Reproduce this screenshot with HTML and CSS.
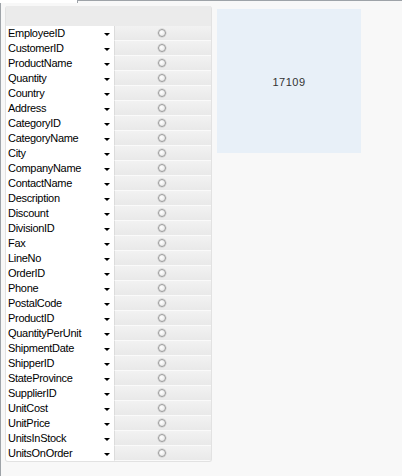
FILE: index.html
```html
<!DOCTYPE html>
<html lang="en">
<head>
    <meta charset="UTF-8">
    <title>Field list</title>
    <link rel="stylesheet" href="styles.css">
</head>
<body>
    <div class="tabline">
        <div class="tab"></div>
        <div class="rule"></div>
    </div>
    <div class="content">
        <div class="grid">
            <div class="grid-head"></div>
            <div class="row"><div class="label"><span>EmployeeID</span><i class="arrow"></i></div><div class="cell"><i class="radio"></i></div></div>
            <div class="row"><div class="label"><span>CustomerID</span><i class="arrow"></i></div><div class="cell"><i class="radio"></i></div></div>
            <div class="row"><div class="label"><span>ProductName</span><i class="arrow"></i></div><div class="cell"><i class="radio"></i></div></div>
            <div class="row"><div class="label"><span>Quantity</span><i class="arrow"></i></div><div class="cell"><i class="radio"></i></div></div>
            <div class="row"><div class="label"><span>Country</span><i class="arrow"></i></div><div class="cell"><i class="radio"></i></div></div>
            <div class="row"><div class="label"><span>Address</span><i class="arrow"></i></div><div class="cell"><i class="radio"></i></div></div>
            <div class="row"><div class="label"><span>CategoryID</span><i class="arrow"></i></div><div class="cell"><i class="radio"></i></div></div>
            <div class="row"><div class="label"><span>CategoryName</span><i class="arrow"></i></div><div class="cell"><i class="radio"></i></div></div>
            <div class="row"><div class="label"><span>City</span><i class="arrow"></i></div><div class="cell"><i class="radio"></i></div></div>
            <div class="row"><div class="label"><span>CompanyName</span><i class="arrow"></i></div><div class="cell"><i class="radio"></i></div></div>
            <div class="row"><div class="label"><span>ContactName</span><i class="arrow"></i></div><div class="cell"><i class="radio"></i></div></div>
            <div class="row"><div class="label"><span>Description</span><i class="arrow"></i></div><div class="cell"><i class="radio"></i></div></div>
            <div class="row"><div class="label"><span>Discount</span><i class="arrow"></i></div><div class="cell"><i class="radio"></i></div></div>
            <div class="row"><div class="label"><span>DivisionID</span><i class="arrow"></i></div><div class="cell"><i class="radio"></i></div></div>
            <div class="row"><div class="label"><span>Fax</span><i class="arrow"></i></div><div class="cell"><i class="radio"></i></div></div>
            <div class="row"><div class="label"><span>LineNo</span><i class="arrow"></i></div><div class="cell"><i class="radio"></i></div></div>
            <div class="row"><div class="label"><span>OrderID</span><i class="arrow"></i></div><div class="cell"><i class="radio"></i></div></div>
            <div class="row"><div class="label"><span>Phone</span><i class="arrow"></i></div><div class="cell"><i class="radio"></i></div></div>
            <div class="row"><div class="label"><span>PostalCode</span><i class="arrow"></i></div><div class="cell"><i class="radio"></i></div></div>
            <div class="row"><div class="label"><span>ProductID</span><i class="arrow"></i></div><div class="cell"><i class="radio"></i></div></div>
            <div class="row"><div class="label"><span>QuantityPerUnit</span><i class="arrow"></i></div><div class="cell"><i class="radio"></i></div></div>
            <div class="row"><div class="label"><span>ShipmentDate</span><i class="arrow"></i></div><div class="cell"><i class="radio"></i></div></div>
            <div class="row"><div class="label"><span>ShipperID</span><i class="arrow"></i></div><div class="cell"><i class="radio"></i></div></div>
            <div class="row"><div class="label"><span>StateProvince</span><i class="arrow"></i></div><div class="cell"><i class="radio"></i></div></div>
            <div class="row"><div class="label"><span>SupplierID</span><i class="arrow"></i></div><div class="cell"><i class="radio"></i></div></div>
            <div class="row"><div class="label"><span>UnitCost</span><i class="arrow"></i></div><div class="cell"><i class="radio"></i></div></div>
            <div class="row"><div class="label"><span>UnitPrice</span><i class="arrow"></i></div><div class="cell"><i class="radio"></i></div></div>
            <div class="row"><div class="label"><span>UnitsInStock</span><i class="arrow"></i></div><div class="cell"><i class="radio"></i></div></div>
            <div class="row"><div class="label"><span>UnitsOnOrder</span><i class="arrow"></i></div><div class="cell"><i class="radio"></i></div></div>
        </div>
        <div class="tile">17109</div>
    </div>
</body>
</html>
```

FILE: styles.css
```css
/* General Styles */
body {
    margin: 0;
    padding: 0;
    background: #f8f8f8;
    font-family: 'Liberation Sans', Arial, sans-serif;
    font-size: 11px;
    color: #000;
    height: 476px;
    overflow: hidden;
}

.tabline {
    display: flex;
    height: 3px;
}

.tab {
    width: 77px;
    background: #fff;
}

.rule {
    flex: 1;
    border-top: 1px solid #9ea3a8;
    border-left: 1px solid #9ea3a8;
    background: #f8f8f8;
}

.content {
    display: flex;
    align-items: flex-start;
    gap: 5px;
    border-left: 1px solid #9ea3a8;
    padding: 3px 0 0 4px;
    height: 473px;
    box-sizing: border-box;
}

/* Field grid */
.grid {
    width: 207px;
    box-sizing: border-box;
    background: #ebebeb;
    border: 1px solid #e2e2e2;
    border-top: none;
    border-radius: 3px;
    overflow: hidden;
}

.grid-head {
    height: 20px;
    background: #ebebeb;
}

.row {
    display: flex;
    height: 15px;
}

.label {
    width: 108px;
    display: flex;
    align-items: center;
    justify-content: space-between;
    padding: 0 4px 0 2px;
    box-sizing: border-box;
    background: #fff;
    line-height: 15px;
    letter-spacing: -0.3px;
}

.arrow {
    width: 0;
    height: 0;
    border-left: 3px solid transparent;
    border-right: 3px solid transparent;
    border-top: 3px solid #000;
    margin-top: 1px;
}

.cell {
    flex: 1;
    display: flex;
    align-items: center;
    justify-content: center;
    border-left: 1px solid #dcdcdc;
    border-bottom: 1px solid #fafafa;
    background: linear-gradient(#f2f2f2, #e9e9e9);
}

.radio {
    width: 6px;
    height: 6px;
    border-radius: 50%;
    border: 1px solid #9a9a9a;
    background: radial-gradient(circle at 40% 40%, #fff, #dedede);
    box-shadow: 0 0 0 0.5px #c8c8c8;
    margin-right: 2px;
}

/* Value tile */
.tile {
    width: 144px;
    height: 144px;
    margin-top: 3px;
    background: #e8f0f8;
    color: #333;
    display: flex;
    align-items: center;
    justify-content: center;
    font-size: 11px;
    letter-spacing: 0.5px;
    padding-top: 1px;
    box-sizing: border-box;
}
```
